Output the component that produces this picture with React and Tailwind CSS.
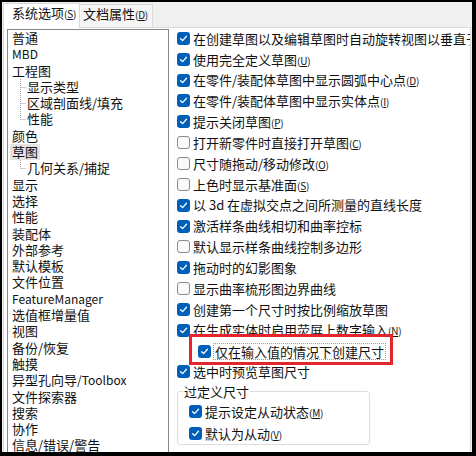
import React from "react";

const TREE = [
  { t: "普通" },
  { t: "MBD", latin: true },
  { t: "工程图" },
  { t: "显示类型", child: true },
  { t: "区域剖面线/填充", child: true },
  { t: "性能", child: true, last: true },
  { t: "颜色" },
  { t: "草图", selected: true },
  { t: "几何关系/捕捉", child: true, last: true },
  { t: "显示" },
  { t: "选择" },
  { t: "性能" },
  { t: "装配体" },
  { t: "外部参考" },
  { t: "默认模板" },
  { t: "文件位置" },
  { t: "FeatureManager", latin: true },
  { t: "选值框增量值" },
  { t: "视图" },
  { t: "备份/恢复" },
  { t: "触摸" },
  { t: "异型孔向导", tail: "/Toolbox" },
  { t: "文件探索器" },
  { t: "搜索" },
  { t: "协作" },
  { t: "信息/错误/警告" },
];

const OPTIONS = [
  { on: true, t: "在创建草图以及编辑草图时自动旋转视图以垂直于草图基准面" },
  { on: true, t: "使用完全定义草图", k: "U" },
  { on: true, t: "在零件/装配体草图中显示圆弧中心点", k: "D" },
  { on: true, t: "在零件/装配体草图中显示实体点", k: "I" },
  { on: true, t: "提示关闭草图", k: "P" },
  { on: false, t: "打开新零件时直接打开草图", k: "C" },
  { on: false, t: "尺寸随拖动/移动修改", k: "O" },
  { on: false, t: "上色时显示基准面", k: "S" },
  { on: true, t: "以 3d 在虚拟交点之间所测量的直线长度" },
  { on: true, t: "激活样条曲线相切和曲率控标" },
  { on: false, t: "默认显示样条曲线控制多边形" },
  { on: true, t: "拖动时的幻影图象" },
  { on: false, t: "显示曲率梳形图边界曲线" },
  { on: true, t: "创建第一个尺寸时按比例缩放草图" },
  { on: true, t: "在生成实体时启用荧屏上数字输入", k: "N" },
];

function Key({ k }) {
  return (
    <span className="text-[10px] tracking-tight">
      (<span className="underline">{k}</span>)
    </span>
  );
}

function Box({ on }) {
  if (!on)
    return <span className="w-[13px] h-[13px] shrink-0 rounded-[3px] border border-[#8a8a8a] bg-[#fafafa]" />;
  return (
    <span className="w-[13px] h-[13px] shrink-0 rounded-[3px] bg-[#005fb8] flex items-center justify-center">
      <svg width="9" height="9" viewBox="0 0 9 9">
        <path d="M1.6 4.7 L3.6 6.6 L7.5 2.3" stroke="white" strokeWidth="1.3" fill="none" strokeLinecap="round" strokeLinejoin="round" />
      </svg>
    </span>
  );
}

function Connector({ last }) {
  return (
    <svg width="15" height="16.3" className="shrink-0">
      <line x1="8.5" y1="0" x2="8.5" y2={last ? 8.5 : 16.3} stroke="#a0a0a0" strokeDasharray="1 1" />
      <line x1="8.5" y1="8.5" x2="14" y2="8.5" stroke="#a0a0a0" strokeDasharray="1 1" />
    </svg>
  );
}

function Option({ on, t, k }) {
  return (
    <div className="flex items-center gap-[3px] h-[20.85px] whitespace-nowrap">
      <Box on={on} />
      <span>
        {t}
        {k && <Key k={k} />}
      </span>
    </div>
  );
}

export default function App() {
  return (
    <div className="w-[476px] h-[456px] overflow-hidden border-l-2 border-t-2 border-r-4 border-b-4 border-black bg-[#f0f0f0] text-[13px] text-[#111] font-['Noto_Sans_CJK_SC','Microsoft_YaHei',sans-serif]">
      <div className="flex flex-col h-full">
        {/* tabs */}
        <div className="flex items-end h-[25px] pl-px shrink-0">
          <div className="relative z-10 -mb-px h-[25px] w-[77px] pl-[8px] bg-white border-x border-t border-[#d9d9d9] leading-[17px] whitespace-nowrap">
            系统选项<Key k="S" />
          </div>
          <div className="h-[23px] w-[73px] pl-[3px] bg-[#f5f5f5] border-r border-t border-[#d9d9d9] leading-[17px] whitespace-nowrap">
            文档属性<Key k="D" />
          </div>
        </div>

        {/* panel */}
        <div className="flex-1 min-h-0 flex bg-white border-x border-t border-[#d9d9d9] ml-px mr-px pl-[3px]">
          <div className="mt-px w-[162px] h-[440px] shrink-0 border border-[#828790] bg-white pl-[4px] overflow-hidden">
            {TREE.map((it, i) => (
              <div key={i} className="flex items-center h-[16.3px] leading-[16.3px] whitespace-nowrap">
                {it.child && <Connector last={it.last} />}
                {it.selected ? (
                  <span className="bg-[#e3e3e3] px-[2px] -mx-[2px]">{it.t}</span>
                ) : it.latin ? (
                  <span className="text-[12px]">{it.t}</span>
                ) : (
                  <span>
                    {it.t}
                    {it.tail && <span className="text-[12px]">{it.tail}</span>}
                  </span>
                )}
              </div>
            ))}
          </div>

          <div className="flex-1 min-w-0 overflow-hidden ml-[8px]">
            {OPTIONS.map((o, i) => (
              <Option key={i} {...o} />
            ))}

            <div className="relative flex items-center gap-[2px] h-[20.85px] pl-[21px] whitespace-nowrap">
              <Box on />
              <span className="border border-dotted border-[#9a9a9a] px-px leading-[15px]">仅在输入值的情况下创建尺寸</span>
              <div className="absolute left-[12px] -top-[7px] w-[204px] h-[31px] border-[3px] border-[#e3262b]" />
            </div>

            <Option on t="选中时预览草图尺寸" />

            <fieldset className="mt-px w-[193px] border border-[#dcdcdc] rounded-[3px] pl-[5px]">
              <legend className="px-px leading-[17px]">过定义尺寸</legend>
              <div className="pl-[6px] pb-0">
                <div className="flex items-center gap-[3px] h-[22px] whitespace-nowrap">
                  <Box on />
                  <span>
                    提示设定从动状态<Key k="M" />
                  </span>
                </div>
                <div className="flex items-center gap-[3px] h-[22px] whitespace-nowrap">
                  <Box on />
                  <span>
                    默认为从动<Key k="V" />
                  </span>
                </div>
              </div>
            </fieldset>
          </div>
        </div>
      </div>
    </div>
  );
}
